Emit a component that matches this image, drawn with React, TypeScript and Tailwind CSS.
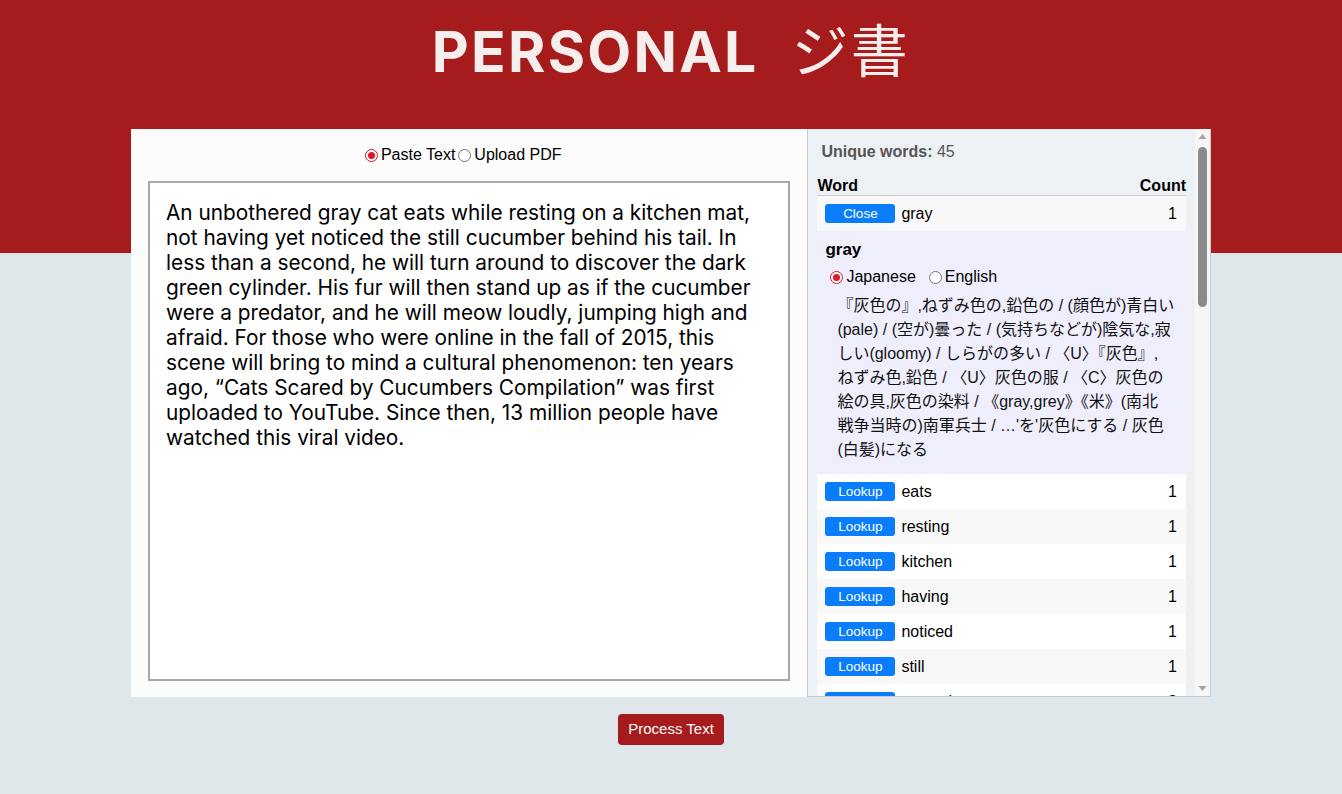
import React, { useState } from "react";

const passage =
  "An unbothered gray cat eats while resting on a kitchen mat, not having yet noticed the still cucumber behind his tail. In less than a second, he will turn around to discover the dark green cylinder. His fur will then stand up as if the cucumber were a predator, and he will meow loudly, jumping high and afraid. For those who were online in the fall of 2015, this scene will bring to mind a cultural phenomenon: ten years ago, \u201cCats Scared by Cucumbers Compilation\u201d was first uploaded to YouTube. Since then, 13 million people have watched this viral video.";

const words: [string, number][] = [
  ["gray", 1], ["eats", 1], ["resting", 1], ["kitchen", 1], ["having", 1],
  ["noticed", 1], ["still", 1], ["cucumber", 2], ["behind", 1], ["tail", 1],
  ["less", 1], ["second", 1], ["turn", 1], ["around", 1], ["discover", 1],
  ["dark", 1], ["green", 1], ["cylinder", 1], ["fur", 1], ["stand", 1],
  ["predator", 1], ["meow", 1], ["loudly", 1], ["jumping", 1], ["high", 1],
  ["afraid", 1], ["online", 1], ["fall", 1], ["scene", 1], ["bring", 1],
  ["mind", 1], ["cultural", 1], ["phenomenon", 1], ["ago", 1], ["cats", 1],
  ["scared", 1], ["cucumbers", 1], ["compilation", 1], ["uploaded", 1], ["youtube", 1],
  ["million", 1], ["people", 1], ["watched", 1], ["viral", 1], ["video", 1],
];

// dictionary entry, kept in the panel's line breaks
const grayJa = [
  "『灰色の』,ねずみ色の,鉛色の / (顔色が)青白い",
  "(pale) / (空が)曇った / (気持ちなどが)陰気な,寂",
  "しい(gloomy) / しらがの多い / 〈U〉『灰色』,",
  "ねずみ色,鉛色 / 〈U〉灰色の服 / 〈C〉灰色の",
  "絵の具,灰色の染料 / 《gray,grey》《米》(南北",
  "戦争当時の)南軍兵士 / …'を'灰色にする / 灰色",
  "(白髪)になる",
];

const grayEn = [
  "of the color between black and white;",
  "dull and cheerless; having gray hair",
];

function Radio({ on }: { on: boolean }) {
  return (
    <span
      className={`flex items-center justify-center w-[13px] h-[13px] rounded-full border shrink-0 bg-white ${
        on ? "border-[#d11a2a]" : "border-[#767676]"
      }`}
    >
      {on && <span className="block w-[7px] h-[7px] rounded-full bg-[#e0162b]" />}
    </span>
  );
}

export default function App() {
  const [mode, setMode] = useState<"paste" | "pdf">("paste");
  const [open, setOpen] = useState<string | null>("gray");
  const [lang, setLang] = useState<"ja" | "en">("ja");

  return (
    <div className="min-h-[794px] bg-[linear-gradient(#a61b1b_253px,#e0e7ea_253px)] font-['Liberation_Sans',Arial,sans-serif] text-black">
      {/* title band */}
      <h1 className="h-[129px] pt-[17px] text-center text-[57px] leading-[70px] font-bold tracking-[0.04em] text-[#f6eded] font-['Inter','Noto_Sans_CJK_JP',sans-serif]">
        PERSONAL<span className="ml-[33px] font-normal tracking-[0.04em]">ジ書</span>
      </h1>

      <div className="mx-auto w-[1080px] h-[568px] flex">
        {/* input side */}
        <div className="w-[677px] bg-[#fcfcfc] px-[17px] pt-[16px] flex flex-col">
          <div className="flex justify-center items-center text-[16px] h-[20px] gap-[3px] pr-[12px]">
            <label className="flex items-center gap-[3px] cursor-pointer" onClick={() => setMode("paste")}>
              <Radio on={mode === "paste"} />
              <span>Paste Text</span>
            </label>
            <label className="flex items-center gap-[3px] cursor-pointer" onClick={() => setMode("pdf")}>
              <Radio on={mode === "pdf"} />
              <span>Upload PDF</span>
            </label>
          </div>
          <textarea
            defaultValue={passage}
            className="mt-[16px] h-[500px] w-full resize-none border-2 border-[#a8a8a8] bg-white pl-[16px] pr-[36px] pt-[17px] text-[20.8px] leading-[25px] text-black outline-none font-['Inter',sans-serif]"
          />
        </div>

        {/* word list side */}
        <div className="w-[404px] flex bg-[#eef1f4] border-l border-r border-b border-[#c9c9c9]">
          <div className="flex-1 overflow-hidden">
            <div className="pl-[13px] pt-[11px] text-[16px] text-[#555]">
              <b>Unique words:</b> 45
            </div>
            <div className="ml-[9px] mr-[9px] mt-[13px]">
              <div className="flex justify-between text-[16px] font-bold h-[19px] leading-[18px] border-b border-[#c9ccd0]">
                <span>Word</span>
                <span>Count</span>
              </div>
              {words.map(([w, c], i) => (
                <React.Fragment key={w}>
                  <div
                    className={`flex items-center h-[35px] pl-[8px] pr-[9px] text-[16px] ${
                      i % 2 === 0 ? "bg-[#f8f8f8]" : "bg-white"
                    }`}
                  >
                    <button
                      onClick={() => setOpen(open === w ? null : w)}
                      className="w-[70px] h-[19px] rounded-[3px] bg-[#0a7dfd] text-white text-[13.5px] leading-[19px] text-center"
                    >
                      {open === w ? "Close" : "Lookup"}
                    </button>
                    <span className="ml-[6px] flex-1">{w}</span>
                    <span>{c}</span>
                  </div>
                  {open === w && (
                    <div className="bg-[#eeeefc] h-[243px] pl-[8px] pr-[8px] pt-[9px]">
                      <div className="text-[17px] font-bold leading-[20px]">{w}</div>
                      <div className="flex items-center gap-[13px] pl-[5px] mt-[7px] text-[16px] leading-[20px]">
                        <label className="flex items-center gap-[3px]" onClick={() => setLang("ja")}>
                          <Radio on={lang === "ja"} />
                          Japanese
                        </label>
                        <label className="flex items-center gap-[3px]" onClick={() => setLang("en")}>
                          <Radio on={lang === "en"} />
                          English
                        </label>
                      </div>
                      <p className="mt-[7px] pl-[12px] text-[16px] leading-[24px] text-[#111] font-['Liberation_Sans','Noto_Sans_CJK_JP',sans-serif]">
                        {(lang === "ja" ? grayJa : grayEn).map((line) => (
                          <span key={line} className="block whitespace-nowrap">
                            {line}
                          </span>
                        ))}
                      </p>
                    </div>
                  )}
                </React.Fragment>
              ))}
            </div>
          </div>

          {/* scrollbar */}
          <div className="w-[15px] bg-[#f6f6f6] flex flex-col items-center">
            <svg width="15" height="16" viewBox="0 0 15 16" className="shrink-0">
              <path d="M3.5 10 L7.5 5 L11.5 10 Z" fill="#a3a3a3" />
            </svg>
            <div className="mt-[2px] h-[160px] w-[9px] rounded-full bg-[#8b8b8b]" />
            <div className="flex-1" />
            <svg width="15" height="16" viewBox="0 0 15 16" className="shrink-0">
              <path d="M3.5 6 L7.5 11 L11.5 6 Z" fill="#a3a3a3" />
            </svg>
          </div>
        </div>
      </div>

      <div className="flex justify-center pt-[17px]">
        <button className="h-[31px] px-[10px] rounded-[4px] bg-[#a61b1b] text-white text-[15px]">
          Process Text
        </button>
      </div>
    </div>
  );
}
